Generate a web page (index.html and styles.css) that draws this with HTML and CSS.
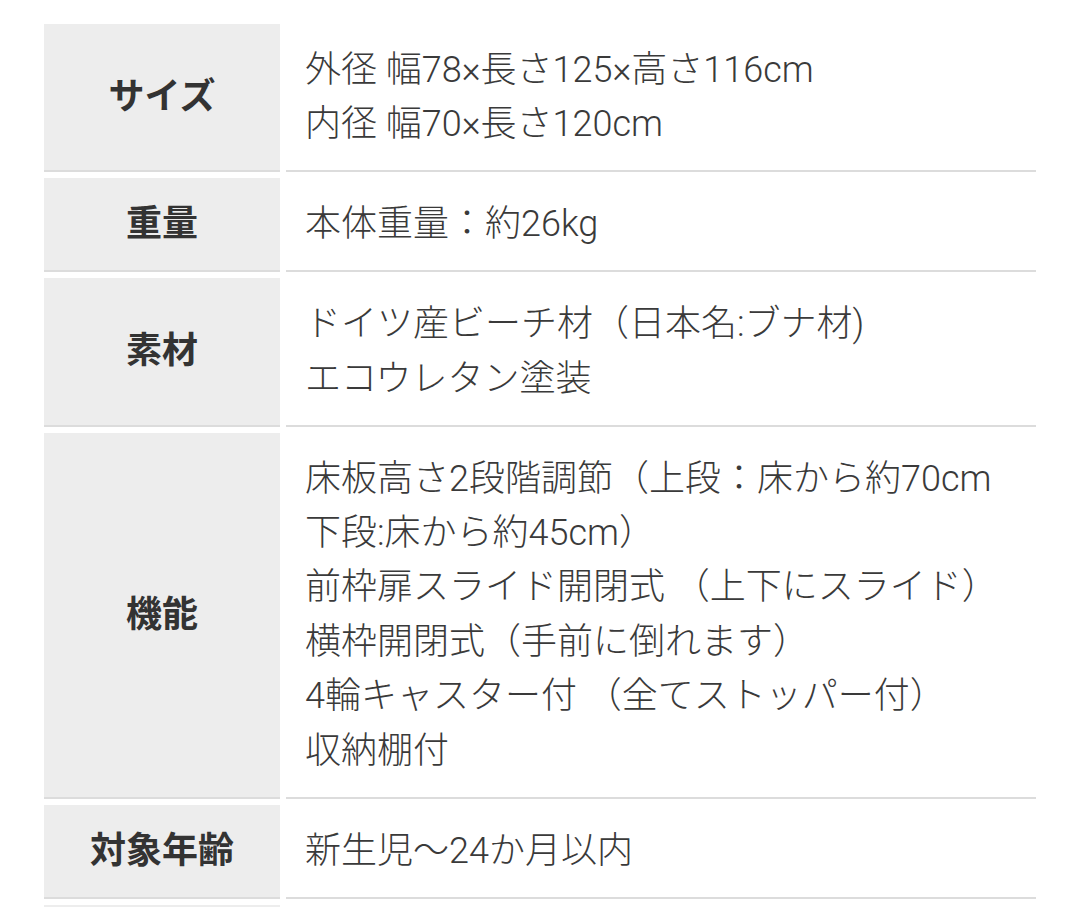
FILE: index.html
```html
<!DOCTYPE html>
<html lang="ja">
<head>
<meta charset="utf-8">
<title>仕様</title>
<link rel="stylesheet" href="styles.css">
</head>
<body>
<table class="spec">
  <colgroup><col class="c-label"><col class="c-value"></colgroup>
  <tbody>
    <tr>
      <th>サイズ</th>
      <td>外径 幅78×長さ125×高さ116cm<br>内径 幅70×長さ120cm</td>
    </tr>
    <tr>
      <th>重量</th>
      <td>本体重量：約26kg</td>
    </tr>
    <tr>
      <th>素材</th>
      <td>ドイツ産ビーチ材（日本名:ブナ材)<br>エコウレタン塗装</td>
    </tr>
    <tr>
      <th>機能</th>
      <td>床板高さ2段階調節（上段：床から約70cm<br>下段:床から約45cm）<br>前枠扉スライド開閉式 （上下にスライド）<br>横枠開閉式（手前に倒れます）<br>4輪キャスター付 （全てストッパー付）<br>収納棚付</td>
    </tr>
    <tr>
      <th>対象年齢</th>
      <td>新生児〜24か月以内</td>
    </tr>
    <tr>
      <th>&nbsp;</th>
      <td>&nbsp;</td>
    </tr>
  </tbody>
</table>
</body>
</html>
```
FILE: styles.css
```css
html, body {
  margin: 0;
  padding: 0;
  background: #ffffff;
}

body {
  font-family: Roboto, "Noto Sans CJK JP", "Noto Sans", sans-serif;
  color: #333333;
}

.spec {
  margin: 18px 0 0 38px;
  width: 1004px;
  table-layout: fixed;
  border-collapse: separate;
  border-spacing: 6px;
}

.c-label { width: 236px; }
.c-value { width: 750px; }

.spec th,
.spec td {
  font-size: 36px;
  line-height: 54.4px;
  padding: 18.8px 19px;
  border-bottom: 2px solid #dcdcdc;
  white-space: nowrap;
}

.spec th {
  background: #ededed;
  font-weight: 700;
  text-align: center;
  vertical-align: middle;
  color: #333333;
}

.spec td {
  font-weight: 300;
  text-align: left;
  vertical-align: middle;
  color: #3a3a3a;
}
```
